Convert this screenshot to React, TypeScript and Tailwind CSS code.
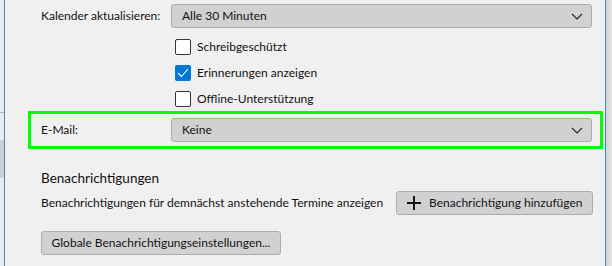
const font = { fontFamily: 'Lato, "Noto Sans", sans-serif' };

function Chevron() {
    return (
        <svg width="12" height="7" viewBox="0 0 12 7" className="flex-shrink-0">
            <path d="M1 1l5 5 5-5" fill="none" stroke="#222" strokeWidth="1.1" />
        </svg>
    );
}

function Dropdown({ value }: { value: string }) {
    return (
        <div className="flex items-center justify-between flex-shrink-0 w-[421px] h-[24px] pl-[10px] pr-[8px] bg-[#d1d1d1] border border-[#adadad] rounded-[3px] text-[12px] text-[#111] whitespace-nowrap">
            <span>{value}</span>
            <Chevron />
        </div>
    );
}

function Checkbox({ checked, label }: { checked?: boolean; label: string }) {
    return (
        <div className="flex items-center h-[16px] gap-[6px]">
            {checked ? (
                <div className="w-[16px] h-[16px] rounded-[2px] bg-[#0078d7] flex items-center justify-center">
                    <svg width="12" height="10" viewBox="0 0 12 10">
                        <path d="M1 5l3.5 3.5L11 1" fill="none" stroke="#fff" strokeWidth="1.1" />
                    </svg>
                </div>
            ) : (
                <div className="w-[16px] h-[16px] rounded-[2px] bg-white border border-[#333]" />
            )}
            <span className="text-[12px] text-[#111] whitespace-nowrap">{label}</span>
        </div>
    );
}

export default function App() {
    return (
        <div className="flex w-[612px] h-[266px] overflow-hidden bg-[#f0f0f0]" style={font}>
            {/* background window on the left */}
            <div className="w-[4px] h-full bg-[#ececec] flex flex-col">
                <div className="h-[112px]" />
                <div className="h-px bg-[#b5b5b5]" />
                <div className="h-[27px]" />
                <div className="h-[38px] bg-[#cfcfcf]" />
            </div>
            <div className="w-px h-full bg-[#4a88b8]" />

            <div className="w-[600px] h-full flex flex-col">
                {/* Kalender aktualisieren */}
                <div className="flex items-center mt-[4px] pl-[36px]">
                    <div className="w-[130px] flex-shrink-0 text-[12px] text-[#111] whitespace-nowrap">Kalender aktualisieren:</div>
                    <Dropdown value="Alle 30 Minuten" />
                </div>

                <div className="flex flex-col gap-[10px] mt-[11px] pl-[170px]">
                    <Checkbox label="Schreibgeschützt" />
                    <Checkbox checked label="Erinnerungen anzeigen" />
                    <Checkbox label="Offline-Unterstützung" />
                </div>

                {/* E-Mail */}
                <div className="mt-[4px] ml-[23px] w-[575px] h-[38px] border-[3px] border-[#00ff00] flex items-center pl-[10px]">
                    <div className="w-[130px] flex-shrink-0 text-[12px] text-[#111]">E-Mail:</div>
                    <Dropdown value="Keine" />
                </div>

                {/* Benachrichtigungen */}
                <div className="pl-[36px] mt-[19px] text-[13.5px] leading-[20px] text-[#111]">Benachrichtigungen</div>
                <div className="flex items-center mt-[3px] pl-[36px]">
                    <span className="w-[355px] flex-shrink-0 text-[12px] text-[#111] whitespace-nowrap">
                        Benachrichtigungen für demnächst anstehende Termine anzeigen
                    </span>
                    <button className="h-[24px] w-[197px] flex-shrink-0 flex items-center gap-[8px] pl-[10px] bg-[#d1d1d1] border border-[#adadad] rounded-[3px] text-[12px] text-[#111] whitespace-nowrap">
                        <svg width="14" height="14" viewBox="0 0 14 14">
                            <path d="M7 0v14M0 7h14" stroke="#111" strokeWidth="2" />
                        </svg>
                        Benachrichtigung hinzufügen
                    </button>
                </div>
                <div className="pl-[36px] mt-[14px]">
                    <button className="h-[24px] w-[240px] px-[9px] bg-[#d1d1d1] border border-[#adadad] rounded-[3px] text-[12px] text-[#111] whitespace-nowrap">
                        Globale Benachrichtigungseinstellungen...
                    </button>
                </div>
            </div>

            <div className="w-px h-full bg-[#4a88b8]" />
            <div className="flex-1 h-full bg-gradient-to-r from-[#d4d4d4] to-[#e6e6e6]" />
        </div>
    );
}
